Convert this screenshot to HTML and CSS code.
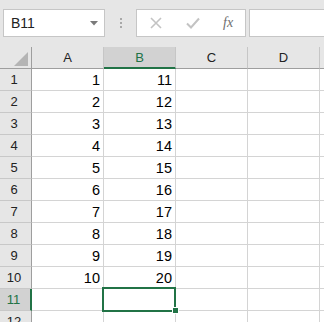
FILE: index.html
```html
<!DOCTYPE html>
<html lang="en">
<head>
    <meta charset="UTF-8">
    <title>Sheet1</title>
    <link rel="stylesheet" href="styles.css">
</head>
<body>

<div class="toolbar">
    <div class="name-box">
        <span>B11</span>
        <svg class="drop" width="8" height="5" viewBox="0 0 8 5"><path d="M0 0H8L4 4.5Z" fill="#7a7a7a"/></svg>
    </div>
    <div class="grip"><i></i><i></i><i></i></div>
    <div class="formula-btns">
        <svg width="12" height="12" viewBox="0 0 12 12"><path d="M1 1L11 11M11 1L1 11" stroke="#c3c3c3" stroke-width="1.6"/></svg>
        <svg width="14" height="12" viewBox="0 0 14 12"><path d="M1 6.5L5 10.5L13 1.5" stroke="#c3c3c3" stroke-width="2" fill="none"/></svg>
        <span class="fx">fx</span>
    </div>
    <div class="formula-input"></div>
</div>

<div class="sheet">
    <div class="corner"><span class="tri"></span></div>
    <div class="col-head">A</div>
    <div class="col-head active">B</div>
    <div class="col-head">C</div>
    <div class="col-head">D</div>
    <div class="col-head"></div>
</div>

<script>
    // build rows 1..12
    const sheet = document.querySelector('.sheet');
    for (let r = 1; r <= 12; r++) {
        const head = document.createElement('div');
        head.className = 'row-head' + (r === 11 ? ' active' : '');
        head.textContent = r;
        sheet.appendChild(head);
        for (let c = 0; c < 5; c++) {
            const cell = document.createElement('div');
            cell.className = 'cell';
            if (r <= 10 && c === 0) cell.textContent = r;
            if (r <= 10 && c === 1) cell.textContent = r + 10;
            if (r === 11 && c === 1) {
                cell.classList.add('selected');
                cell.innerHTML = '<span class="handle"></span>';
            }
            sheet.appendChild(cell);
        }
    }
</script>

</body>
</html>
```

FILE: styles.css
```css
body {
    margin: 0;
    width: 324px;
    height: 322px;
    overflow: hidden;
    background: #ffffff;
    font-family: "Liberation Sans", Arial, sans-serif;
}

.toolbar {
    display: flex;
    align-items: flex-start;
    height: 47px;
    padding-top: 9px;
    box-sizing: border-box;
    background: #e6e6e6;
}

.name-box {
    display: flex;
    align-items: center;
    justify-content: space-between;
    width: 102px;
    height: 28px;
    margin-left: 3px;
    padding: 0 6px 0 7px;
    box-sizing: border-box;
    background: #ffffff;
    border: 1px solid #c6c6c6;
    font-size: 14px;
    color: #222222;
}

.grip {
    display: flex;
    flex-direction: column;
    gap: 2px;
    width: 2px;
    margin: 9px 14px 0 15px;
}

.grip i {
    width: 2px;
    height: 2px;
    background: #a8a8a8;
}

.formula-btns {
    display: flex;
    align-items: center;
    width: 110px;
    height: 28px;
    padding-left: 13px;
    box-sizing: border-box;
    background: #ffffff;
    border: 1px solid #c6c6c6;
}

.formula-btns svg {
    margin-right: 24px;
}

.formula-btns svg + svg {
    margin-right: 23px;
}

.fx {
    font-family: "Liberation Serif", serif;
    font-style: italic;
    font-size: 14px;
    color: #6e6e6e;
}

.formula-input {
    flex: 1;
    height: 28px;
    margin-left: 3px;
    box-sizing: border-box;
    background: #ffffff;
    border: 1px solid #c6c6c6;
    border-right: none;
}

.sheet {
    display: grid;
    grid-template-columns: 32px repeat(5, 72px);
    grid-template-rows: 22px;
    grid-auto-rows: 22px;
    font-size: 14px;
    color: #000000;
}

.corner,
.col-head,
.row-head,
.cell {
    box-sizing: border-box;
    border-right: 1px solid #d4d4d4;
    border-bottom: 1px solid #d4d4d4;
}

.corner {
    position: relative;
    background: #e6e6e6;
    border-right-color: #9e9e9e;
    border-bottom-color: #9e9e9e;
}

.tri {
    position: absolute;
    right: 3px;
    bottom: 2px;
    width: 0;
    height: 0;
    border-left: 14px solid transparent;
    border-bottom: 14px solid #b4b4b4;
}

.col-head {
    display: flex;
    align-items: center;
    justify-content: center;
    background: #e6e6e6;
    border-right-color: #c6c6c6;
    border-bottom-color: #9e9e9e;
    font-size: 13px;
    color: #222222;
}

.col-head.active {
    background: #d2d2d2;
    border-bottom: 2px solid #217346;
    color: #217346;
}

.row-head {
    display: flex;
    align-items: center;
    justify-content: center;
    padding-right: 3px;
    background: #e6e6e6;
    border-right-color: #9e9e9e;
    border-bottom-color: #c8c8c8;
    font-size: 13px;
    color: #222222;
}

.row-head.active {
    background: #d2d2d2;
    border-right: 2px solid #217346;
    color: #217346;
}

.cell {
    display: flex;
    align-items: center;
    justify-content: flex-end;
    padding-right: 3px;
    font-size: 14.5px;
}

.cell.selected {
    position: relative;
}

.cell.selected::after {
    content: "";
    position: absolute;
    top: -2px;
    left: -2px;
    right: -1px;
    bottom: -2px;
    border: 2px solid #217346;
}

.handle {
    position: absolute;
    right: -4px;
    bottom: -4px;
    z-index: 1;
    width: 5px;
    height: 5px;
    background: #217346;
    border: 1px solid #ffffff;
}
```
